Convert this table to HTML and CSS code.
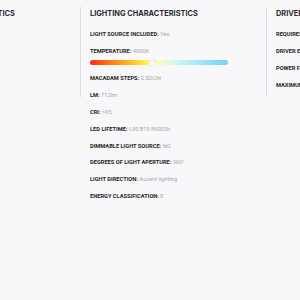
FILE: index.html
```html
<!DOCTYPE html>
<html>
<head>
<meta charset="utf-8">
<link rel="stylesheet" href="styles.css">
</head>
<body>
<div class="specs">
  <section class="col col-first">
    <h2 class="title">PHYSICAL CHARACTERISTICS</h2>
    <div class="row"><span class="label">IP RATING:</span> <span class="value">IP20</span></div>
    <div class="row"><span class="label">FINISH:</span> <span class="value">White</span></div>
    <div class="row"><span class="label">WEIGHT:</span> <span class="value">1.2kg</span></div>
    <div class="row"><span class="label">SIZE:</span> <span class="value">S</span></div>
  </section>
  <section class="col col-mid">
    <h2 class="title">LIGHTING CHARACTERISTICS</h2>
    <div class="row"><span class="label">LIGHT SOURCE INCLUDED:</span> <span class="value">Yes</span></div>
    <div class="row"><span class="label">TEMPERATURE:</span> <span class="value">4000K</span></div>
    <div class="temp-bar"><span class="knob" style="left: 45%"></span></div>
    <div class="row"><span class="label">MACADAM STEPS:</span> <span class="value">2.5DCM</span></div>
    <div class="row"><span class="label">LM:</span> <span class="value">712lm</span></div>
    <div class="row"><span class="label">CRI:</span> <span class="value">&gt;95</span></div>
    <div class="row"><span class="label">LED LIFETIME:</span> <span class="value">L90 B10 89000h</span></div>
    <div class="row"><span class="label">DIMMABLE LIGHT SOURCE:</span> <span class="value">NO</span></div>
    <div class="row"><span class="label">DEGREES OF LIGHT APERTURE:</span> <span class="value">360°</span></div>
    <div class="row"><span class="label">LIGHT DIRECTION:</span> <span class="value">Accent lighting</span></div>
    <div class="row"><span class="label">ENERGY CLASSIFICATION:</span> <span class="value">E</span></div>
  </section>
  <section class="col col-last">
    <h2 class="title">DRIVER CHARACTERISTICS</h2>
    <div class="row"><span class="label">REQUIRES DRIVER:</span> <span class="value">Yes</span></div>
    <div class="row"><span class="label">DRIVER EXTERNAL:</span> <span class="value">Yes</span></div>
    <div class="row"><span class="label">POWER FACTOR:</span> <span class="value">0.9</span></div>
    <div class="row"><span class="label">MAXIMUM POWER:</span> <span class="value">8W</span></div>
  </section>
</div>
</body>
</html>
```
FILE: styles.css
```css
html, body {
  margin: 0;
  padding: 0;
  overflow: hidden;
  background: #f8f8fa;
  font-family: Roboto, "Liberation Sans", sans-serif;
}
body {
  width: 300px;
  height: 300px;
}
.specs {
  display: flex;
  align-items: flex-start;
  margin-left: -104px;
  padding-top: 7px;
  width: 600px;
}
.col {
  width: 185px;
  flex: 0 0 auto;
  box-sizing: border-box;
  padding: 2.2px 9px 8.4px 9px;
}
.col-first {
  border-right: 1px solid #dcdce0;
}
.col-last {
  border-left: 1px solid #dcdce0;
}
.title {
  margin: 0 0 12.2px 0;
  font-family: Inter, Roboto, "Liberation Sans", sans-serif;
  font-size: 7.4px;
  line-height: 10px;
  font-weight: 700;
  color: #2b2b2f;
  white-space: nowrap;
}
.row {
  font-size: 5.7px;
  line-height: 7px;
  margin-bottom: 9.8px;
  white-space: nowrap;
}
.col .row:last-child {
  margin-bottom: 0;
}
.label {
  font-weight: 700;
  color: #1f1f23;
}
.value {
  color: #a5a5aa;
}
.temp-bar {
  position: relative;
  width: 138px;
  height: 5px;
  border-radius: 3px;
  margin: -4.65px 0 10.05px 0;
  background: linear-gradient(to right, #ff2a12 0%, #ff7a14 15%, #ffc21e 30%, #fff04a 40%, #fcfbc8 50%, #d8f7e8 60%, #b8eef7 72%, #8fdcf6 88%, #78d2f5 100%);
}
.knob {
  position: absolute;
  top: -0.5px;
  width: 6px;
  height: 6px;
  margin-left: -3px;
  border-radius: 50%;
  background: #ffffff;
  box-shadow: 0 0 1px rgba(0,0,0,0.35);
}
```
